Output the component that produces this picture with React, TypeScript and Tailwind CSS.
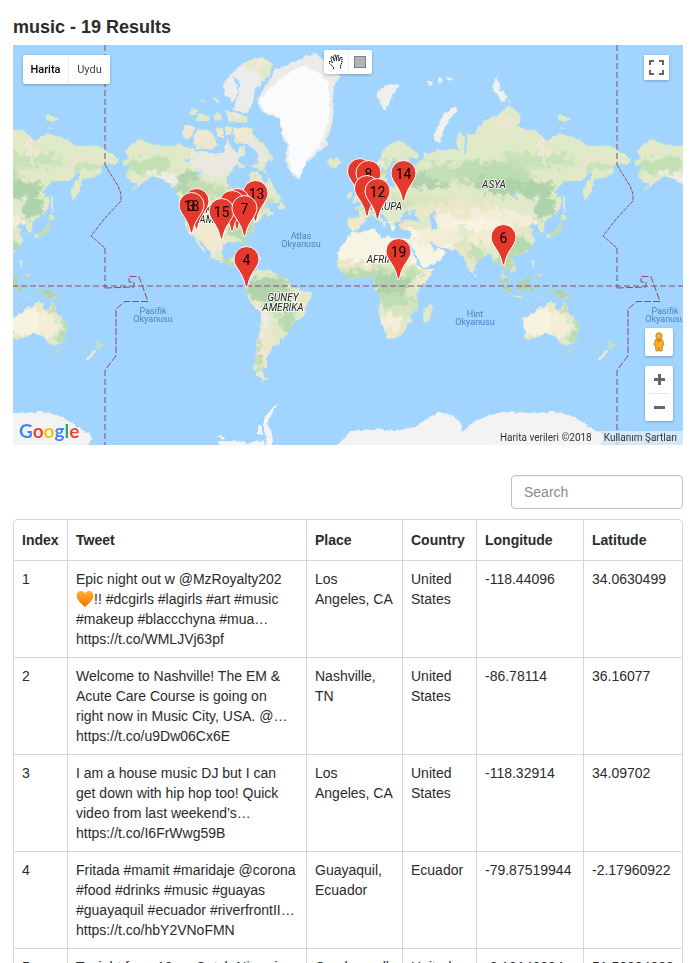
import React from "react";

type Patch = [color: string, lon: number, lat: number, rx: number, ry: number, rotate?: number];

/* World drawn at Mercator zoom 1: 512 units wide, lon 0 at x=361, equator at y=286 */
const px = (lon: number) => 361 + lon * (512 / 360);
const py = (lat: number) =>
  286 - (512 / (2 * Math.PI)) * Math.log(Math.tan(Math.PI / 4 + (lat * Math.PI) / 360));

const toPath = (ring: string) =>
  "M" +
  ring
    .split(" ")
    .map((pair) => {
      const [lon, lat] = pair.split(",").map(Number);
      return `${px(lon).toFixed(1)} ${py(lat).toFixed(1)}`;
    })
    .join("L") +
  "Z";

const LAND: string[] = [
  // North America
  "-168,65.6 -163,66.5 -166.5,68.3 -163,69.5 -156.5,71.3 -150,70.5 -141,69.7 -134,69.5 -128,70.2 -124,69.5 -115,68.5 -108,67.8 -101,67.8 -96,68.2 -94,71.5 -91,69 -87,68 -85,69.5 -82,69.5 -81.5,67.5 -86,66.3 -88,64 -94,61 -94.5,58.8 -92.5,57 -88,56.5 -82.5,55.2 -82,52.5 -79.5,51.3 -79,54.5 -77,56 -78.5,58.7 -77.5,62.5 -73,62.2 -70,61 -69.5,59 -66,58.7 -64.5,60.3 -62,57.5 -59,54.8 -56,53 -56,51.5 -60,50.2 -66.5,50.2 -69,48.5 -65,49.2 -64.5,47 -61,45.5 -64,44.5 -66,43.6 -66,45.2 -70,43.7 -70.5,41.8 -74,40.6 -76,37 -75.8,35.3 -79,33.3 -81.3,31 -80.2,26.5 -80.8,25.2 -82.5,28 -84,30 -89.5,30.2 -90,29.2 -94,29.6 -97.3,27.5 -97.8,22.5 -95.5,18.7 -91.5,18.5 -90.3,21 -87,21.4 -88.3,16 -83.3,15 -83.7,11 -79.7,9.4 -77.3,8.5 -78,7.5 -80.5,7.3 -83,8.3 -85.7,10.5 -87.7,13 -92,14.3 -95,16 -101,17.3 -105.5,20 -105.5,22.5 -109,26 -112.5,29.5 -114.7,31.8 -112,27 -109.5,23 -112,25 -115,28 -117,32.5 -120.6,34.6 -124,40 -124.3,47 -123,48.8 -128,51.5 -130.5,55 -135,58.5 -140,59.8 -147,60.8 -151.5,59.3 -154,58.5 -162,55 -158,57.8 -157.5,58.8 -162,58.8 -165.5,61 -164.5,63 -161,64.2 -166,64.6",
  // South America
  "-77.3,8.5 -75,10.8 -71.7,12.3 -71,11 -68,11 -62,10.6 -60,8.5 -55,6 -51.5,4.3 -50,1 -48,-1 -44,-2.5 -38.5,-3.8 -35.2,-5.5 -35,-8.5 -38.5,-13 -39,-18 -41,-22 -45,-23.5 -48.5,-26 -49,-28.7 -52.5,-33 -54.5,-35 -58,-34 -57,-36.5 -58,-38.3 -62,-39 -63,-41 -65,-43 -67,-46 -66,-48 -69,-51 -68.5,-53 -65.5,-54.8 -69,-55.5 -73,-53 -75.5,-50 -75,-46 -73,-41.5 -73.5,-37 -71.5,-32 -70.5,-25 -70.3,-18.5 -76,-14 -79.5,-7.5 -81.2,-5 -80,-2.5 -80,0.5 -77.5,3 -77.5,7",
  // Canadian Arctic
  "-90,77 -80,76.3 -76,78 -75,79.5 -65,81.3 -62,82.5 -70,83.1 -82,82.7 -91,81.5 -85,80.5 -86,79",
  "-97,80.5 -91,81.5 -86,79.5 -90,78.1 -96,79",
  "-96,76.8 -90,76.5 -80,75.7 -80,74.6 -92,74.8",
  "-90,73.5 -80,73.7 -75,72 -68,70 -62,67 -62,65.5 -66,66 -68,63.2 -66,62 -72,63 -78,64.5 -73,65 -73,68 -79,70 -89,70.5",
  "-118,71.5 -115,73.3 -105,73 -101,70 -105,68.8 -116,69",
  "-125,72 -124,74.2 -117,74 -119,72 -123,71.2",
  "-116,75 -115,76.3 -106,75.8 -107,75",
  "-121,76 -119,77.2 -114,76.8 -118,75.8",
  "-102,73.7 -97,73.5 -97,71.5 -101,72",
  "-95,74 -90.5,73.8 -91,72.5 -95,72.2",
  "-87,65.5 -81,64 -86,63.5",
  "-103,76.3 -98,76.4 -98,75 -103,75.2",
  "-104,78.8 -99,78.2 -102,77.8",
  "-113,78.4 -109,78.2 -111,77.9",
  "-80,73.6 -76,73.2 -78,72.8",
  "-59,48 -56,51.3 -53.5,48.5 -54,47",
  // Caribbean
  "-85,22 -80,23 -74.5,20 -78,20.3",
  "-74,19.8 -69,19.5 -70,18 -74,18.3",
  // North Atlantic
  "-24,65.5 -22,66.4 -16,66.5 -13.7,65 -18,63.4 -22.5,64",
  "-5.5,50 1.3,51.3 1.5,52.8 -2,55.5 -2,57.6 -5,58.5 -6,56.5 -3,54 -4.5,53 -5,52",
  "-10,52 -6.3,52.3 -6,54.5 -8,55.2 -10,54",
  // Eurasia
  "-9,38.5 -9,43.2 -1.7,43.4 -1.2,46 -4.7,48.2 -1.5,48.7 1.5,50.5 4.5,52.5 8.3,54 8.2,57 10.5,57.5 10,55 14,54 19,54.5 21,57 24,57.2 23.5,59.2 30,60 22.5,60 21.5,62.5 25,65 22,65.8 17.5,62 17,60.5 18.8,59.8 16.5,57 14.3,55.6 12.8,55.6 11,59 8,58 5.2,59 5,62 12,65.5 15,68.3 20,70 26,71 31,70.3 41,67.5 40,66.3 33,66.7 36,64 38,64.5 44,66 44,68.5 47,67.7 54,68.7 60,68.5 65,69 69,68.5 67,71 69.5,73 73,71.5 72.5,68 74,68 74.5,72.5 80,72.3 82,73.7 87,75 98,76.3 104,77.7 113,76 110,74 113,73.7 123,73 130,71 140,72.5 150,71.5 160,69.7 170,69.8 176,69.6 180,68.8 190,66.2 187,64.5 180,65 177.5,64.5 179,62.3 171,60.2 164,60 163,58 162,55 157,51 156,56 163,61.5 160,61.7 155,59.2 143,59.2 135.5,54.7 141,53 140.5,48.5 135.5,44 131,42.7 128,39.5 129.3,35.5 126.5,34.5 125,38 124.3,40 121.5,39 121,40.8 118,39 119,37.5 122,37.2 119.5,35 121.8,31 121,28 117,23.7 110.5,21 108,21.5 106,19 109,13 108.5,11 105,8.7 104.8,10.4 101,13.3 100,13 99.3,9.5 103.3,4.5 103.8,1.5 101,3 98.3,8 98.5,13 97.5,16.5 94.3,16 92,21.5 90,22 86.8,21 82.3,16.7 80,15 80,11 77.5,8 74.5,14 72.7,20 70,21 69,22.3 67,24.8 61.5,25 57,26.8 54,26.6 50.5,30 48,30 51,25 51.5,24.2 56,26 59.7,22.5 55.5,17.5 52,15.5 45,12.8 43,13 39,21 35,28 34.5,31.5 36,36 31,36.5 27.3,37 26.5,39.5 29,41 33,42 38,41 41.5,41.5 37,45 39,47.2 35,46.3 36,45 33.5,44.5 33,46 30.7,46.3 28,43 28.5,41.2 26,40.8 23,40.5 24,38 22.8,36.5 19.5,40.5 19.5,42 13.7,45.5 12.5,44 18.4,40 16,38 15.5,40 9,44.3 3.2,43 3,41.7 -0.5,39 -2,36.8 -5.5,36",
  // Africa and Madagascar
  "-6,35.8 -2,35 10,37.2 11,34 15,32.3 20,32.8 25,31.6 32,31.2 34.3,31.3 34.5,28 32.5,30 35.5,24 37.3,21 39,15.5 43,11.8 51.2,11.8 47,4.5 41,-2 39,-6 40.7,-15 35,-20 35.5,-24 32.7,-26 31,-30 26,-34 20,-34.8 18.3,-33 15,-27 12,-17 13.5,-12 12,-5 9,-1 9.5,4 4,6.3 -4,5.2 -8,4.4 -13,8.5 -17,14.5 -16.3,19 -17,21.5 -13,27.7 -9.7,31",
  "49.3,-12 50.3,-16 47,-25 44,-24 44.5,-16.5",
  // Arctic Russia
  "11,79 14,80 20,80.4 27,80.2 22,79 17,76.7 14,77.7",
  "51,71 56,70.5 57,72.5 61,75 68,76.7 66,77.2 58,76.2 53,73.5",
  "46,80.8 51,80.6 48,80.2",
  "54,81.2 58,80.9 55,80.5",
  "60,81.3 64,80.9 61,80.7",
  "92,80.2 96,81.2 98,80 95,79.2",
  "95,79.5 100,79.6 103,78.8 99,78",
  "103,78.4 106,78 104,77.8",
  "138,75.9 141,76 148,75.2 143,74.9 139,75",
  "140,73.8 143,73.6 141,73.2",
  "178,71.4 182,71.3 180,70.9",
  // East Asia
  "130,31.5 131,34 136,35.8 140,40 140.3,41.3 141.5,39.5 140.8,35.7 136,33.6",
  "140,42 142,45.4 145,43.3 143,42",
  "142,54 143.5,52 143.2,49 143,46 141.8,46 142,50",
  "120,23 121.5,25 121,22",
  "120.5,18.5 122,18 121.5,14 124,12.7 120.5,14",
  "122,7 126,9.5 126,6.5 124,6",
  "80,9.5 81.7,7.5 80.3,6",
  // Indonesia and New Guinea
  "95.3,5.5 98,4 103.5,-1 106,-3.5 105.5,-5.8 102,-4 98.5,1",
  "105.5,-6.8 109,-6.7 114.4,-7.8 114,-8.7 108,-7.8",
  "109,1.5 113,3 117,7 119,5 117.5,1 116,-4 111,-3",
  "119,0 121,1 125,1.5 121,0.5 122.5,-4.5 120.5,-3 119.5,-5.5",
  "124,-9 127,-8.3 125,-9.5",
  "131,-0.8 134,-1 135,-3.3 141,-2.7 147,-6.5 150.5,-10.5 146,-8.5 143,-9 138,-8.3 137,-5 132.5,-3",
  // Australia and New Zealand
  "113.5,-22 114,-26 115.7,-32 115.2,-34.3 118,-35 124,-33.8 129,-31.6 134,-32.7 137.5,-34 140,-37.5 144,-38.6 147,-38 150,-37.3 153,-31 153.3,-26 149,-21 146,-18.5 145.3,-15 142.5,-10.8 141.5,-13 140.5,-17.5 136,-15.5 136.8,-12.2 132.5,-11.4 130,-13.5 129,-15 126,-14 122.3,-18 117,-20.7",
  "145,-41 148.2,-41 147.5,-43.3 146,-43.3",
  "173,-34.6 175.5,-36.8 178.4,-37.8 176.5,-41 175,-41.3 174,-39 175,-37.5",
  "172.7,-40.6 174,-41.8 171,-44 169.5,-46.5 166.5,-46 170,-43",
];

const GREENLAND =
  "-73,78.2 -68,80 -60,82 -45,82.8 -32,83.5 -22,82.3 -14,81.3 -20,80 -19,77 -20,75 -22,72.5 -25,71 -23,70 -30,68.2 -37,65.7 -41,64.5 -43,60 -48,61 -51.5,64 -53.5,67 -51,69.5 -54.5,71 -58,75.5 -66,76 -71,77";
const ICE_CAP =
  "-72,78.2 -64,80 -52,81.6 -40,82.4 -30,81.6 -23,80.6 -22,78 -23,75 -26,72 -29,69.5 -38,66 -43,60.5 -48,62 -51,66 -50,70 -54,72 -58,75.8 -68,76.6";
const WATERS: string[] = [
  "51,47 53,45.5 50.5,44.5 53,41 54,37 49.5,37.5 49.5,40.5 47.5,43",
  "-92,47 -86,48.5 -84.5,46.5 -88,46.8",
  "-87.5,42 -85,45.8 -80,45 -83,43.5 -84,45.5 -86.3,42.5",
  "-83,41.6 -79,43.6 -76.5,44 -79,42.6",
  "-125,66 -120,66.5 -121,65.2",
  "-116,62 -110,62.7 -114,61",
  "104,51.5 109.5,55.5 109,53.5",
];

const PATCHES: Patch[] = [
  // North America
  ["#c3e0b5", -150, 64.5, 24, 8, -5],
  ["#b1d3ad", -120, 57, 18, 13, 40],
  ["#c1dfb3", -108, 56, 24, 7, 12],
  ["#eae8e1", -103, 65, 25, 13, 10],
  ["#eae8e1", -93, 67, 16, 10],
  ["#e9e8e3", -74, 68.5, 18, 7, 40],
  ["#dfe9c8", -73, 59, 12, 9],
  ["#c8e2ba", -85, 50.5, 24, 6],
  ["#c3e0b5", -70, 51, 16, 6],
  ["#f1ead0", -110, 40, 18, 16],
  ["#f1ead0", -103, 29, 12, 13, 30],
  ["#ece6c9", -103, 46, 14, 8],
  ["#b7d9af", -83, 37, 14, 13, 15],
  ["#b7d9af", -90, 16, 10, 4, 25],
  ["#b4d6ae", -123, 45, 4, 12],
  ["#eeeeee", -137, 60.5, 14, 3, 30],
  ["#eceded", -146, 62, 7, 3],
  ["#efe8d0", -110, 72.5, 26, 13],
  ["#ececec", -84, 79.5, 22, 26, 20],
  ["#efe8cf", -72, 82.5, 16, 4, -25],
  ["#efe9d2", -84, 72.5, 12, 7],
  // South America
  ["#b0d3ad", -64, -4, 25, 15, 10],
  ["#c6e1b7", -52, -11, 16, 14],
  ["#e6e8c8", -43, -10, 9, 12, 20],
  ["#b7d8b0", -54, -25, 9, 14, 25],
  ["#dfe7c3", -60, -31, 8, 12],
  ["#efe7cb", -67, -42, 9, 26, 8],
  ["#ececea", -68, -23, 3, 17],
  ["#f0e9d0", -76, -12, 3, 12, -35],
  ["#b2d5ae", -72.5, -44, 2, 16],
  // Africa
  ["#f8f4e4", 8, 27, 50, 23],
  ["#ede6c8", 5, 14, 48, 5],
  ["#d5e5be", 5, 11, 45, 4],
  ["#b9dab1", 8, 7, 40, 6],
  ["#afd3ad", 21, 1, 18, 13],
  ["#c0deb4", 24, -10, 22, 8],
  ["#d6e4bf", 30, -17, 15, 8],
  ["#f4efdb", 19, -27, 12, 12],
  ["#ece6c8", 25, -32, 10, 5],
  ["#f2ecd5", 45, 6, 7, 8, 30],
  ["#c2dfb5", 37, 8, 6, 6],
  ["#e6e6c6", 35, -5, 4, 6],
  ["#cfe3bd", 36, -16, 4, 8],
  // Europe
  ["#efe8cb", -4, 40, 9, 7],
  ["#bddcb2", 8, 48, 14, 6],
  ["#cfe4bd", 22, 50, 20, 6],
  ["#bbdbb2", 14, 62, 10, 7, -50],
  ["#eeeeee", 11, 64, 12, 2, -50],
  ["#b9dab0", 28, 63, 10, 9],
  ["#afd2ac", 47, 60, 26, 10],
  ["#c5e0b7", 62, 62, 30, 9],
  ["#dbe6c1", 48, 52, 24, 5],
  ["#efefed", 18, 79, 22, 24],
  ["#f1f1ef", 60, 74.5, 15, 22, 30],
  ["#f1f1ef", 55, 81, 20, 8],
  ["#f1f1ef", 98, 79.8, 11, 14],
  // Middle East and Central Asia
  ["#f8f4e4", 46, 25, 24, 19, 20],
  ["#f2edd5", 55, 33, 23, 11],
  ["#ede7ca", 68, 47, 38, 9],
  ["#f6f1de", 63, 41, 17, 8],
  ["#ece5c7", 33, 39, 13, 4],
  ["#d9e5c0", 76, 27, 14, 5, 30],
  ["#e5e6c6", 76, 20, 10, 12],
  ["#c5dfb6", 82, 20, 6, 12, -25],
  // Siberia, China
  ["#bcdcb2", 92, 62, 42, 11, 4],
  ["#aed2ac", 100, 57, 33, 8, 4],
  ["#aed2ac", 122, 56, 22, 8],
  ["#c7e1b8", 125, 66, 36, 8],
  ["#e2e8c9", 98, 72, 26, 7],
  ["#ece7cd", 100, 74.8, 18, 7],
  ["#ece8d4", 128, 68, 5, 15, -15],
  ["#e7e7cb", 165, 66, 22, 5],
  ["#c9e2bb", 168, 64, 16, 4],
  ["#f4eed9", 98, 41, 36, 12, 5],
  ["#f8f4e4", 84, 39, 17, 7],
  ["#f3edd6", 90, 33, 21, 8],
  ["#aed2ac", 129, 48, 10, 12, 20],
  ["#e3e7c5", 115, 36, 10, 8],
  ["#b7d9b0", 111, 27, 15, 9],
  ["#bddbb3", 101, 19, 10, 14],
  ["#afd2ac", 115, 1, 14, 14],
  ["#aed2ac", 101, 0, 12, 8, 40],
  ["#acd1ab", 140, -6, 16, 8, 15],
  ["#c3deb5", 138, 37, 10, 10, -50],
  // Oceania
  ["#eee7c8", 134, -15, 26, 9],
  ["#f8f3e0", 127, -25, 24, 13],
  ["#f4eed8", 140, -27, 11, 10],
  ["#bedcb2", 151, -31, 5, 18, 10],
  ["#c5dfb6", 143, -14, 4, 6],
  ["#bad9b0", 146, -42, 6, 5],
  ["#c3dfb5", 176, -38, 7, 6],
  ["#e9ebe4", 170, -43, 5, 2, -45],
];

const LAND_PATH = LAND.map(toPath).join("");

function World() {
  return (
    <g id="world">
      <g filter="url(#coast)">
        <path d={LAND_PATH} fill="#e0e9c8" />
        <g clipPath="url(#land)">
          <g filter="url(#mottle)">
            {PATCHES.map(([fill, lon, lat, rx, ry, rotate = 0], i) => (
              <ellipse
                key={i}
                fill={fill}
                rx={rx}
                ry={ry}
                transform={`translate(${px(lon)} ${py(lat)}) rotate(${rotate})`}
              />
            ))}
          </g>
        </g>
        <path d={toPath(GREENLAND)} fill="#ebebe8" />
        <path d={toPath(ICE_CAP)} fill="#fafbfd" />
        {WATERS.map((ring) => (
          <path key={ring} d={toPath(ring)} fill="#a1d5ff" />
        ))}
        <path
          fill="#f3f3f3"
          d="M333 449 345 438 350 431 372 429 395 431 415 427 433 415 440 412 452 416 460 421 462 432 475 421 490 415 503 412 525 413 552 412 566 414 580 420 592 429 602 434 603 440 598 449ZM265 449 267 437 264 431 264 421 270 410 279 403 274 411 267 421 271 430 273 440 272 449ZM216 436 224 436 223 439ZM218 441 235 441 250 443 263 440 264 449 222 449ZM258 425 262 425 262 435 258 434Z"
        />
      </g>
    </g>
  );
}

function Dateline() {
  return (
    <g id="dateline" fill="none" stroke="#8a4c68" strokeDasharray="6 3">
      <path d="M105 45V165" strokeWidth="2" strokeOpacity="0.5" />
      <path d="M105 165 118 186 121 194V201L105 218 91 236 105 248" strokeDasharray="4 1" />
      <path d="M105 248V288" strokeWidth="2" strokeOpacity="0.5" />
      <path d="M105 288 134 287V282H129V276.500H139L148 301.500H125L116 309V356L105 370" strokeDasharray="7 2" />
      <path d="M105 370V445" strokeWidth="2" strokeOpacity="0.5" />
    </g>
  );
}

const PINS: { x: number; top: number; label: string; dx?: number }[] = [
  { x: 360, top: 158, label: "2" },
  { x: 368.5, top: 160, label: "8" },
  { x: 367, top: 175, label: "" },
  { x: 377.5, top: 178, label: "12" },
  { x: 403.5, top: 160, label: "14" },
  { x: 196.5, top: 188, label: "" },
  { x: 191.5, top: 192, label: "3" },
  { x: 191.5, top: 192, label: "18" },
  { x: 255.5, top: 180, label: "13", dx: 1 },
  { x: 237, top: 188, label: "" },
  { x: 232, top: 190, label: "" },
  { x: 221.5, top: 198, label: "15" },
  { x: 244.5, top: 195, label: "7" },
  { x: 246.5, top: 246, label: "4" },
  { x: 398.5, top: 238, label: "19" },
  { x: 503.5, top: 224, label: "6" },
];

const region = "fill-[#222] text-[10px] italic";
const ocean = "fill-[#4a7fc4] text-[9px]";

function MapCanvas() {
  return (
    <svg
      viewBox="13 45 670 400"
      preserveAspectRatio="xMidYMid slice"
      className="block h-full w-full font-['Roboto',sans-serif]"
      role="img"
      aria-label="Map of tweets"
      textAnchor="middle"
    >
      <defs>
        <clipPath id="land">
          <path d={LAND_PATH} />
        </clipPath>
        <filter id="coast" x="-5%" y="-5%" width="110%" height="110%" colorInterpolationFilters="sRGB">
          <feTurbulence type="fractalNoise" baseFrequency="0.22" numOctaves="3" seed="4" />
          <feDisplacementMap in="SourceGraphic" scale="4" xChannelSelector="R" yChannelSelector="G" />
        </filter>
        <filter id="mottle" x="-5%" y="-5%" width="110%" height="110%" colorInterpolationFilters="sRGB">
          <feGaussianBlur in="SourceGraphic" stdDeviation="1.2" result="soft" />
          <feTurbulence type="fractalNoise" baseFrequency="0.14" numOctaves="4" seed="9" />
          <feDisplacementMap in="soft" scale="20" xChannelSelector="R" yChannelSelector="G" />
        </filter>
      </defs>

      <rect x="-600" y="45" width="2000" height="400" fill="#a1d5ff" />
      <World />
      <use href="#world" x="-512" />
      <use href="#world" x="512" />

      <path
        d="M-600 286H1400"
        stroke="#8a4c68"
        strokeOpacity="0.5"
        strokeWidth="2"
        strokeDasharray="6 3"
        fill="none"
      />
      <Dateline />
      <use href="#dateline" x="512" />

      <g stroke="#ffffff" strokeOpacity="0.75" strokeWidth="2" strokeLinejoin="round" className="[paint-order:stroke]">
        <text x="494" y="188" className={region}>ASYA</text>
        <text x="384" y="210" className={region}>AVRUPA</text>
        <text x="383" y="263" className={region}>AFRİKA</text>
        <text x="220" y="213" className={region}>KUZEY</text>
        <text x="220" y="223" className={region}>AMERİKA</text>
        <text x="283" y="301" className={region}>GÜNEY</text>
        <text x="283" y="311" className={region}>AMERİKA</text>
      </g>
      <g className={ocean}>
        <text x="301" y="239">Atlas</text>
        <text x="301" y="247">Okyanusu</text>
        <text x="153" y="314">Pasifik</text>
        <text x="153" y="322">Okyanusu</text>
        <text x="475" y="317">Hint</text>
        <text x="475" y="325">Okyanusu</text>
        <text x="665" y="314">Pasifik</text>
        <text x="665" y="322">Okyanusu</text>
      </g>

      {PINS.map((pin, i) => (
        <path
          key={i}
          transform={`translate(${pin.x} ${pin.top})`}
          d="M0 0.500A12.500 12.500 0 0 0 -12.500 13C-12.500 22 -3 26 -1 41H1C3 26 12.500 22 12.500 13A12.500 12.500 0 0 0 0 0.500Z"
          fill="#e6392e"
          stroke="#fff"
          className={pin.label === "18" ? "hidden" : undefined}
        />
      )).flatMap((shape, i) => [
        shape,
        <text key={`label-${i}`} x={PINS[i].x + (PINS[i].dx ?? 0)} y={PINS[i].top + 19} className="fill-black text-[14px]">
          {PINS[i].label}
        </text>,
      ])}
    </svg>
  );
}

const control = "absolute bg-white shadow-[0_1px_3px_rgba(0,0,0,0.25)]";

function MapView() {
  return (
    <section className="relative h-[400px] overflow-hidden font-['Roboto',sans-serif]">
      <MapCanvas />

      <div className={`${control} left-[10px] top-[10px] flex h-[29px] rounded-[2px] text-[11px]`}>
        <button type="button" className="w-[46px] border-r border-[#eee] font-medium text-black">
          Harita
        </button>
        <button type="button" className="w-[41px] text-[#444]">
          Uydu
        </button>
      </div>

      <div className={`${control} left-1/2 top-[5px] -ml-6 flex h-6 w-12 rounded-[2px]`}>
        <button type="button" aria-label="Pan" className="flex flex-1 items-center justify-center border-r border-[#eee]">
          <svg viewBox="0 0 16 16" className="h-4 w-4" fill="#fff" stroke="#000" strokeWidth="1" strokeDasharray="1.6 0.5">
            <path d="M5.500 15V13L1.500 9.500V7.500H3L4.500 9 3 4.500V3H4.500L6.500 7 5.500 2.500 6.500 1H7.500L8.500 6.500 9 1.500H10.500L11 7 12.500 3.500H14V8L12.500 12V15" />
          </svg>
        </button>
        <button type="button" aria-label="Draw a rectangle" className="flex flex-1 items-center justify-center">
          <span className="h-3 w-3 border border-[#808080] bg-[#b3b3b3]" />
        </button>
      </div>

      <button
        type="button"
        aria-label="Full screen"
        className={`${control} right-[14px] top-[10px] flex h-[25px] w-[25px] items-center justify-center`}
      >
        <svg viewBox="0 0 15 15" className="h-[15px] w-[15px]" fill="none" stroke="#666" strokeWidth="2">
          <path d="M1 5V1H5M10 1H14V5M14 10V14H10M5 14H1V10" />
        </svg>
      </button>

      <button
        type="button"
        aria-label="Street View"
        className={`${control} bottom-[89px] right-[10px] flex h-7 w-7 items-center justify-center rounded-[2px]`}
      >
        <svg viewBox="0 0 12 20" className="h-5 w-3" fill="#fbb01f" stroke="#a8812e" strokeWidth="0.8">
          <path d="M2.500 7.500H9.500L11 13 9.500 13.500 9 19H6.500L6 15 5.500 19H3L2.500 13.500 1 13Z" />
          <path d="M3.500 7.500H8.500L6 10.500Z" fill="#e8710a" stroke="none" />
          <circle cx="6" cy="4" r="3.200" />
        </svg>
      </button>

      <div className={`${control} bottom-6 right-[10px] flex h-[55px] w-7 flex-col rounded-[2px] px-1`}>
        <button type="button" aria-label="Zoom in" className="flex flex-1 items-center justify-center">
          <svg viewBox="0 0 11 11" className="h-[11px] w-[11px]" stroke="#666" strokeWidth="3">
            <path d="M5.500 0V11M0 5.500H11" />
          </svg>
        </button>
        <button type="button" aria-label="Zoom out" className="flex flex-1 items-center justify-center border-t border-[#e6e6e6]">
          <svg viewBox="0 0 11 11" className="h-[11px] w-[11px]" stroke="#666" strokeWidth="3">
            <path d="M0 5.500H11" />
          </svg>
        </button>
      </div>

      <a
        href="#google"
        className="absolute bottom-0 left-[6px] font-['Lato',sans-serif] text-[19px] font-bold leading-[28px] [text-shadow:0_0_1px_#fff,0_0_2px_#fff]"
      >
        <span className="text-[#4285f4]">G</span>
        <span className="text-[#ea4335]">o</span>
        <span className="text-[#fbbc05]">o</span>
        <span className="text-[#4285f4]">g</span>
        <span className="text-[#34a853]">l</span>
        <span className="text-[#ea4335]">e</span>
      </a>

      <div className="absolute bottom-0 right-0 flex h-[14px] items-center gap-3 bg-[#f5f5f5]/60 px-[6px] text-[10px] text-[#333]">
        <span>Harita verileri ©2018</span>
        <a href="#terms">Kullanım Şartları</a>
      </div>
    </section>
  );
}

function OrangeHeart() {
  return (
    <svg viewBox="0 0 18 18" className="inline-block h-[18px] w-[18px] align-[-4px]" role="img" aria-label="orange heart">
      <defs>
        <linearGradient id="heart" x1="0" y1="0" x2="0" y2="1">
          <stop offset="0" stopColor="#ffb23a" />
          <stop offset="0.5" stopColor="#ff9110" />
          <stop offset="1" stopColor="#ee7a08" />
        </linearGradient>
      </defs>
      <path
        d="M9 17C6 14 1 10.500 0.700 6.200 0.600 3 2.600 1 5 1 6.800 1 8.300 2 9 3.800 9.700 2 11.200 1 13 1 15.400 1 17.400 3 17.300 6.200 17 10.500 12 14 9 17Z"
        fill="url(#heart)"
      />
    </svg>
  );
}

type Row = { tweet: React.ReactNode[]; place: string; country: string; lon: string; lat: string };

const ROWS: Row[] = [
  {
    tweet: [
      "Epic night out w @MzRoyalty202",
      <>
        <OrangeHeart />
        !! #dcgirls #lagirls #art #music
      </>,
      "#makeup #blaccchyna #mua…",
      "https://t.co/WMLJVj63pf",
    ],
    place: "Los Angeles, CA",
    country: "United States",
    lon: "-118.44096",
    lat: "34.0630499",
  },
  {
    tweet: [
      "Welcome to Nashville! The EM &",
      "Acute Care Course is going on",
      "right now in Music City, USA. @…",
      "https://t.co/u9Dw06Cx6E",
    ],
    place: "Nashville, TN",
    country: "United States",
    lon: "-86.78114",
    lat: "36.16077",
  },
  {
    tweet: [
      "I am a house music DJ but I can",
      "get down with hip hop too! Quick",
      "video from last weekend’s…",
      "https://t.co/I6FrWwg59B",
    ],
    place: "Los Angeles, CA",
    country: "United States",
    lon: "-118.32914",
    lat: "34.09702",
  },
  {
    tweet: [
      "Fritada #mamit #maridaje @corona",
      "#food #drinks #music #guayas",
      "#guayaquil #ecuador #riverfrontII…",
      "https://t.co/hbY2VNoFMN",
    ],
    place: "Guayaquil, Ecuador",
    country: "Ecuador",
    lon: "-79.87519944",
    lat: "-2.17960922",
  },
  {
    tweet: ["Tonight from 10pm Catch Nixxy in"],
    place: "Camberwell",
    country: "United",
    lon: "-0.10142294",
    lat: "51.50024323",
  },
];

const HEADERS: [name: string, width: string][] = [
  ["Index", "w-[54px]"],
  ["Tweet", ""],
  ["Place", "w-[96px]"],
  ["Country", "w-[74px]"],
  ["Longitude", "w-[107px]"],
  ["Latitude", "w-[98px]"],
];

const cell = "border-b border-r border-[#d6d6d6] p-2 align-top last:border-r-0";

export default function App() {
  return (
    <main className="h-screen overflow-hidden bg-white pl-[13px] pr-[15px] pt-[17px] font-['Liberation_Sans',Arial,sans-serif] text-[14px] leading-[20px] text-[#292b2c]">
      <h1 className="mb-2 text-[18px] font-bold leading-[20px]">music - 19 Results</h1>
      <MapView />

      <div className="mt-[30px] flex justify-end">
        <input
          type="search"
          aria-label="Search"
          placeholder="Search"
          className="h-[34px] w-[172px] rounded border border-[#c4c4c4] px-3 text-[14px] shadow-[inset_0_1px_1px_rgba(0,0,0,0.07)] outline-none placeholder:text-[#8c8c8c]"
        />
      </div>

      <div className="mt-[10px] rounded-t border border-[#d6d6d6]">
        <table className="w-full table-fixed border-separate border-spacing-0 text-left">
          <thead>
            <tr>
              {HEADERS.map(([name, width]) => (
                <th
                  key={name}
                  scope="col"
                  className={`${width} border-b border-r border-[#d6d6d6] px-2 py-[10px] font-bold last:border-r-0`}
                >
                  {name}
                </th>
              ))}
            </tr>
          </thead>
          <tbody>
            {ROWS.map((row, i) => (
              <tr key={row.lon}>
                <td className={cell}>{i + 1}</td>
                <td className={cell}>
                  {row.tweet.map((line, j) => (
                    <span key={j} className="block whitespace-nowrap">
                      {line}
                    </span>
                  ))}
                </td>
                <td className={cell}>{row.place}</td>
                <td className={cell}>{row.country}</td>
                <td className={cell}>{row.lon}</td>
                <td className={cell}>{row.lat}</td>
              </tr>
            ))}
          </tbody>
        </table>
      </div>
    </main>
  );
}
